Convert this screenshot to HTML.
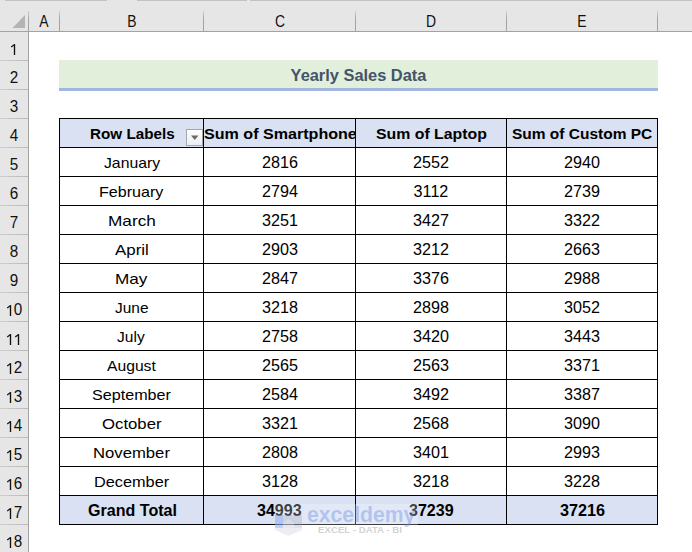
<!DOCTYPE html>
<html><head><meta charset="utf-8"><style>
html,body{margin:0;padding:0;}
body{width:692px;height:552px;overflow:hidden;position:relative;background:#fff;font-family:"Liberation Sans",sans-serif;}
body div{position:absolute;}
.t{line-height:1;text-align:center;white-space:nowrap;}
.f{line-height:1;white-space:nowrap;transform-origin:0 0;}
</style></head><body>
<div style="left:0px;top:0px;width:692px;height:31px;background:#e6e6e6;"></div>
<div style="left:5px;top:0px;width:102px;height:1px;background:#c2c2c2;"></div>
<div style="left:137px;top:0px;width:110px;height:1px;background:#c2c2c2;"></div>
<div style="left:250px;top:0px;width:442px;height:1px;background:#c2c2c2;"></div>
<div style="left:0px;top:31px;width:692px;height:1px;background:#a3a3a3;"></div>
<div style="left:0px;top:32px;width:28px;height:520px;background:#e6e6e6;"></div>
<div style="left:28px;top:11px;width:1px;height:21px;background:linear-gradient(#d2d2d2,#a3a3a3 40%);"></div>
<div style="left:28px;top:32px;width:1px;height:520px;background:#a3a3a3;"></div>
<div style="left:59px;top:11px;width:1px;height:20px;background:linear-gradient(#d2d2d2,#a3a3a3 40%);"></div>
<div style="left:203px;top:11px;width:1px;height:20px;background:linear-gradient(#d2d2d2,#a3a3a3 40%);"></div>
<div style="left:355px;top:11px;width:1px;height:20px;background:linear-gradient(#d2d2d2,#a3a3a3 40%);"></div>
<div style="left:506px;top:11px;width:1px;height:20px;background:linear-gradient(#d2d2d2,#a3a3a3 40%);"></div>
<div style="left:657px;top:11px;width:1px;height:20px;background:linear-gradient(#d2d2d2,#a3a3a3 40%);"></div>
<svg style="position:absolute;left:0;top:0" width="30" height="31"><polygon points="12.5,28 25,28 25,15" fill="#b4b4b4"/></svg>
<div style="left:0px;top:60px;width:28px;height:1px;background:linear-gradient(90deg,#cdcdcd,#b8b8b8);"></div>
<div style="left:0px;top:89px;width:28px;height:1px;background:linear-gradient(90deg,#cdcdcd,#b8b8b8);"></div>
<div style="left:0px;top:118px;width:28px;height:1px;background:linear-gradient(90deg,#cdcdcd,#b8b8b8);"></div>
<div style="left:0px;top:147px;width:28px;height:1px;background:linear-gradient(90deg,#cdcdcd,#b8b8b8);"></div>
<div style="left:0px;top:176px;width:28px;height:1px;background:linear-gradient(90deg,#cdcdcd,#b8b8b8);"></div>
<div style="left:0px;top:205px;width:28px;height:1px;background:linear-gradient(90deg,#cdcdcd,#b8b8b8);"></div>
<div style="left:0px;top:234px;width:28px;height:1px;background:linear-gradient(90deg,#cdcdcd,#b8b8b8);"></div>
<div style="left:0px;top:263px;width:28px;height:1px;background:linear-gradient(90deg,#cdcdcd,#b8b8b8);"></div>
<div style="left:0px;top:292px;width:28px;height:1px;background:linear-gradient(90deg,#cdcdcd,#b8b8b8);"></div>
<div style="left:0px;top:321px;width:28px;height:1px;background:linear-gradient(90deg,#cdcdcd,#b8b8b8);"></div>
<div style="left:0px;top:350px;width:28px;height:1px;background:linear-gradient(90deg,#cdcdcd,#b8b8b8);"></div>
<div style="left:0px;top:379px;width:28px;height:1px;background:linear-gradient(90deg,#cdcdcd,#b8b8b8);"></div>
<div style="left:0px;top:408px;width:28px;height:1px;background:linear-gradient(90deg,#cdcdcd,#b8b8b8);"></div>
<div style="left:0px;top:437px;width:28px;height:1px;background:linear-gradient(90deg,#cdcdcd,#b8b8b8);"></div>
<div style="left:0px;top:466px;width:28px;height:1px;background:linear-gradient(90deg,#cdcdcd,#b8b8b8);"></div>
<div style="left:0px;top:495px;width:28px;height:1px;background:linear-gradient(90deg,#cdcdcd,#b8b8b8);"></div>
<div style="left:0px;top:524px;width:28px;height:1px;background:linear-gradient(90deg,#cdcdcd,#b8b8b8);"></div>
<div class="t" style="left:-106.00px;top:14.03px;width:300px;font-size:15.8px;font-weight:normal;color:#111;transform:scaleX(0.88)">A</div>
<div class="t" style="left:-18.50px;top:14.03px;width:300px;font-size:15.8px;font-weight:normal;color:#111;transform:scaleX(0.88)">B</div>
<div class="t" style="left:129.50px;top:14.03px;width:300px;font-size:15.8px;font-weight:normal;color:#111;transform:scaleX(0.88)">C</div>
<div class="t" style="left:281.00px;top:14.03px;width:300px;font-size:15.8px;font-weight:normal;color:#111;transform:scaleX(0.88)">D</div>
<div class="t" style="left:432.00px;top:14.03px;width:300px;font-size:15.8px;font-weight:normal;color:#111;transform:scaleX(0.88)">E</div>
<svg style="position:absolute;left:9.60px;top:43.50px" width="8" height="12"><path d="M4.5 0.2V11" stroke="#111" stroke-width="1.35" fill="none"/><path d="M4.6 0.5L1.2 2.9" stroke="#111" stroke-width="1.2" fill="none"/></svg>
<div class="t" style="left:3.60px;top:69.96px;width:20px;font-size:16px;font-weight:normal;color:#111;transform:scaleX(0.95)">2</div>
<div class="t" style="left:3.60px;top:98.96px;width:20px;font-size:16px;font-weight:normal;color:#111;transform:scaleX(0.95)">3</div>
<div class="t" style="left:3.60px;top:127.96px;width:20px;font-size:16px;font-weight:normal;color:#111;transform:scaleX(0.95)">4</div>
<div class="t" style="left:3.60px;top:156.96px;width:20px;font-size:16px;font-weight:normal;color:#111;transform:scaleX(0.95)">5</div>
<div class="t" style="left:3.60px;top:185.96px;width:20px;font-size:16px;font-weight:normal;color:#111;transform:scaleX(0.95)">6</div>
<div class="t" style="left:3.60px;top:214.96px;width:20px;font-size:16px;font-weight:normal;color:#111;transform:scaleX(0.95)">7</div>
<div class="t" style="left:3.60px;top:243.96px;width:20px;font-size:16px;font-weight:normal;color:#111;transform:scaleX(0.95)">8</div>
<div class="t" style="left:3.60px;top:272.96px;width:20px;font-size:16px;font-weight:normal;color:#111;transform:scaleX(0.95)">9</div>
<svg style="position:absolute;left:5.60px;top:304.50px" width="8" height="12"><path d="M4.5 0.2V11" stroke="#111" stroke-width="1.35" fill="none"/><path d="M4.6 0.5L1.2 2.9" stroke="#111" stroke-width="1.2" fill="none"/></svg>
<div class="t" style="left:7.60px;top:301.96px;width:20px;font-size:16px;font-weight:normal;color:#111;transform:scaleX(0.95)">0</div>
<svg style="position:absolute;left:5.60px;top:333.50px" width="8" height="12"><path d="M4.5 0.2V11" stroke="#111" stroke-width="1.35" fill="none"/><path d="M4.6 0.5L1.2 2.9" stroke="#111" stroke-width="1.2" fill="none"/></svg>
<svg style="position:absolute;left:13.60px;top:333.50px" width="8" height="12"><path d="M4.5 0.2V11" stroke="#111" stroke-width="1.35" fill="none"/><path d="M4.6 0.5L1.2 2.9" stroke="#111" stroke-width="1.2" fill="none"/></svg>
<svg style="position:absolute;left:5.60px;top:362.50px" width="8" height="12"><path d="M4.5 0.2V11" stroke="#111" stroke-width="1.35" fill="none"/><path d="M4.6 0.5L1.2 2.9" stroke="#111" stroke-width="1.2" fill="none"/></svg>
<div class="t" style="left:7.60px;top:359.96px;width:20px;font-size:16px;font-weight:normal;color:#111;transform:scaleX(0.95)">2</div>
<svg style="position:absolute;left:5.60px;top:391.50px" width="8" height="12"><path d="M4.5 0.2V11" stroke="#111" stroke-width="1.35" fill="none"/><path d="M4.6 0.5L1.2 2.9" stroke="#111" stroke-width="1.2" fill="none"/></svg>
<div class="t" style="left:7.60px;top:388.96px;width:20px;font-size:16px;font-weight:normal;color:#111;transform:scaleX(0.95)">3</div>
<svg style="position:absolute;left:5.60px;top:420.50px" width="8" height="12"><path d="M4.5 0.2V11" stroke="#111" stroke-width="1.35" fill="none"/><path d="M4.6 0.5L1.2 2.9" stroke="#111" stroke-width="1.2" fill="none"/></svg>
<div class="t" style="left:7.60px;top:417.96px;width:20px;font-size:16px;font-weight:normal;color:#111;transform:scaleX(0.95)">4</div>
<svg style="position:absolute;left:5.60px;top:449.50px" width="8" height="12"><path d="M4.5 0.2V11" stroke="#111" stroke-width="1.35" fill="none"/><path d="M4.6 0.5L1.2 2.9" stroke="#111" stroke-width="1.2" fill="none"/></svg>
<div class="t" style="left:7.60px;top:446.96px;width:20px;font-size:16px;font-weight:normal;color:#111;transform:scaleX(0.95)">5</div>
<svg style="position:absolute;left:5.60px;top:478.50px" width="8" height="12"><path d="M4.5 0.2V11" stroke="#111" stroke-width="1.35" fill="none"/><path d="M4.6 0.5L1.2 2.9" stroke="#111" stroke-width="1.2" fill="none"/></svg>
<div class="t" style="left:7.60px;top:475.96px;width:20px;font-size:16px;font-weight:normal;color:#111;transform:scaleX(0.95)">6</div>
<svg style="position:absolute;left:5.60px;top:507.50px" width="8" height="12"><path d="M4.5 0.2V11" stroke="#111" stroke-width="1.35" fill="none"/><path d="M4.6 0.5L1.2 2.9" stroke="#111" stroke-width="1.2" fill="none"/></svg>
<div class="t" style="left:7.60px;top:504.96px;width:20px;font-size:16px;font-weight:normal;color:#111;transform:scaleX(0.95)">7</div>
<svg style="position:absolute;left:5.60px;top:536.50px" width="8" height="12"><path d="M4.5 0.2V11" stroke="#111" stroke-width="1.35" fill="none"/><path d="M4.6 0.5L1.2 2.9" stroke="#111" stroke-width="1.2" fill="none"/></svg>
<div class="t" style="left:7.60px;top:533.96px;width:20px;font-size:16px;font-weight:normal;color:#111;transform:scaleX(0.95)">8</div>
<div style="left:59px;top:60px;width:599px;height:28px;background:#e2efda;"></div>
<div style="left:59px;top:88px;width:599px;height:3px;background:#a2b6e0;"></div>
<div class="t" style="left:208.50px;top:67.12px;width:300px;font-size:16.4px;font-weight:bold;color:#44546a;">Yearly Sales Data</div>
<div style="left:60px;top:119px;width:597px;height:28px;background:#d9e1f2;"></div>
<div style="left:60px;top:496px;width:597px;height:28px;background:#d9e1f2;"></div>
<div style="left:59px;top:118px;width:1px;height:407px;background:#000;"></div>
<div style="left:203px;top:118px;width:1px;height:407px;background:#000;"></div>
<div style="left:355px;top:118px;width:1px;height:407px;background:#000;"></div>
<div style="left:506px;top:118px;width:1px;height:407px;background:#000;"></div>
<div style="left:657px;top:118px;width:1px;height:407px;background:#000;"></div>
<div style="left:59px;top:118px;width:599px;height:1px;background:#000;"></div>
<div style="left:59px;top:147px;width:599px;height:1px;background:#000;"></div>
<div style="left:59px;top:176px;width:599px;height:1px;background:#000;"></div>
<div style="left:59px;top:205px;width:599px;height:1px;background:#000;"></div>
<div style="left:59px;top:234px;width:599px;height:1px;background:#000;"></div>
<div style="left:59px;top:263px;width:599px;height:1px;background:#000;"></div>
<div style="left:59px;top:292px;width:599px;height:1px;background:#000;"></div>
<div style="left:59px;top:321px;width:599px;height:1px;background:#000;"></div>
<div style="left:59px;top:350px;width:599px;height:1px;background:#000;"></div>
<div style="left:59px;top:379px;width:599px;height:1px;background:#000;"></div>
<div style="left:59px;top:408px;width:599px;height:1px;background:#000;"></div>
<div style="left:59px;top:437px;width:599px;height:1px;background:#000;"></div>
<div style="left:59px;top:466px;width:599px;height:1px;background:#000;"></div>
<div style="left:59px;top:495px;width:599px;height:1px;background:#000;"></div>
<div style="left:59px;top:524px;width:599px;height:1px;background:#000;"></div>
<div class="f" style="left:89.77px;top:125.87px;font-size:15.273px;font-weight:bold;color:#000;transform:scaleX(0.9976);">Row Labels</div>
<div style="left:204px;top:119px;width:151px;height:28px;overflow:hidden"><div class="f" style="left:0.12px;top:6.75px;font-size:15.418px;font-weight:bold;color:#000;transform:scaleX(1.0439);">Sum of Smartphone</div></div>
<div class="f" style="left:375.72px;top:125.87px;font-size:15.273px;font-weight:bold;color:#000;transform:scaleX(1.0378);">Sum of Laptop</div>
<div class="f" style="left:511.54px;top:125.87px;font-size:15.273px;font-weight:bold;color:#000;transform:scaleX(1.0144);">Sum of Custom PC</div>
<div style="left:186px;top:129px;width:17px;height:17px;border:1px solid #a8a8a8;background:linear-gradient(#fdfdfd,#eceef2);box-sizing:border-box"></div>
<svg style="position:absolute;left:186px;top:129px" width="17" height="17"><polygon points="5,6.5 12.5,6.5 8.75,11" fill="#6b6b6b"/></svg>
<div class="f" style="left:103.56px;top:155.03px;font-size:15.564px;font-weight:normal;color:#000;transform:scaleX(1.0128);">January</div>
<div class="t" style="left:129.50px;top:154.63px;width:300px;font-size:15.8px;font-weight:normal;color:#000;transform:scaleX(1.023)">2816</div>
<div class="t" style="left:281.00px;top:154.63px;width:300px;font-size:15.8px;font-weight:normal;color:#000;transform:scaleX(1.023)">2552</div>
<div class="t" style="left:432.00px;top:154.63px;width:300px;font-size:15.8px;font-weight:normal;color:#000;transform:scaleX(1.023)">2940</div>
<div class="f" style="left:99.47px;top:184.03px;font-size:15.564px;font-weight:normal;color:#000;transform:scaleX(1.0349);">February</div>
<div class="t" style="left:129.50px;top:183.63px;width:300px;font-size:15.8px;font-weight:normal;color:#000;transform:scaleX(1.023)">2794</div>
<div class="t" style="left:281.00px;top:183.63px;width:300px;font-size:15.8px;font-weight:normal;color:#000;transform:scaleX(1.023)">3112</div>
<div class="t" style="left:432.00px;top:183.63px;width:300px;font-size:15.8px;font-weight:normal;color:#000;transform:scaleX(1.023)">2739</div>
<div class="f" style="left:107.58px;top:213.03px;font-size:15.564px;font-weight:normal;color:#000;transform:scaleX(1.1067);">March</div>
<div class="t" style="left:129.50px;top:212.63px;width:300px;font-size:15.8px;font-weight:normal;color:#000;transform:scaleX(1.023)">3251</div>
<div class="t" style="left:281.00px;top:212.63px;width:300px;font-size:15.8px;font-weight:normal;color:#000;transform:scaleX(1.023)">3427</div>
<div class="t" style="left:432.00px;top:212.63px;width:300px;font-size:15.8px;font-weight:normal;color:#000;transform:scaleX(1.023)">3322</div>
<div class="f" style="left:114.86px;top:242.03px;font-size:15.564px;font-weight:normal;color:#000;transform:scaleX(1.0853);">April</div>
<div class="t" style="left:129.50px;top:241.63px;width:300px;font-size:15.8px;font-weight:normal;color:#000;transform:scaleX(1.023)">2903</div>
<div class="t" style="left:281.00px;top:241.63px;width:300px;font-size:15.8px;font-weight:normal;color:#000;transform:scaleX(1.023)">3212</div>
<div class="t" style="left:432.00px;top:241.63px;width:300px;font-size:15.8px;font-weight:normal;color:#000;transform:scaleX(1.023)">2663</div>
<div class="f" style="left:115.48px;top:271.03px;font-size:15.564px;font-weight:normal;color:#000;transform:scaleX(1.1035);">May</div>
<div class="t" style="left:129.50px;top:270.63px;width:300px;font-size:15.8px;font-weight:normal;color:#000;transform:scaleX(1.023)">2847</div>
<div class="t" style="left:281.00px;top:270.63px;width:300px;font-size:15.8px;font-weight:normal;color:#000;transform:scaleX(1.023)">3376</div>
<div class="t" style="left:432.00px;top:270.63px;width:300px;font-size:15.8px;font-weight:normal;color:#000;transform:scaleX(1.023)">2988</div>
<div class="f" style="left:114.67px;top:300.03px;font-size:15.564px;font-weight:normal;color:#000;transform:scaleX(0.9927);">June</div>
<div class="t" style="left:129.50px;top:299.63px;width:300px;font-size:15.8px;font-weight:normal;color:#000;transform:scaleX(1.023)">3218</div>
<div class="t" style="left:281.00px;top:299.63px;width:300px;font-size:15.8px;font-weight:normal;color:#000;transform:scaleX(1.023)">2898</div>
<div class="t" style="left:432.00px;top:299.63px;width:300px;font-size:15.8px;font-weight:normal;color:#000;transform:scaleX(1.023)">3052</div>
<div class="f" style="left:117.47px;top:329.03px;font-size:15.564px;font-weight:normal;color:#000;transform:scaleX(1.0003);">July</div>
<div class="t" style="left:129.50px;top:328.63px;width:300px;font-size:15.8px;font-weight:normal;color:#000;transform:scaleX(1.023)">2758</div>
<div class="t" style="left:281.00px;top:328.63px;width:300px;font-size:15.8px;font-weight:normal;color:#000;transform:scaleX(1.023)">3420</div>
<div class="t" style="left:432.00px;top:328.63px;width:300px;font-size:15.8px;font-weight:normal;color:#000;transform:scaleX(1.023)">3443</div>
<div class="f" style="left:106.96px;top:358.03px;font-size:15.564px;font-weight:normal;color:#000;transform:scaleX(1.0086);">August</div>
<div class="t" style="left:129.50px;top:357.63px;width:300px;font-size:15.8px;font-weight:normal;color:#000;transform:scaleX(1.023)">2565</div>
<div class="t" style="left:281.00px;top:357.63px;width:300px;font-size:15.8px;font-weight:normal;color:#000;transform:scaleX(1.023)">2563</div>
<div class="t" style="left:432.00px;top:357.63px;width:300px;font-size:15.8px;font-weight:normal;color:#000;transform:scaleX(1.023)">3371</div>
<div class="f" style="left:91.57px;top:387.03px;font-size:15.564px;font-weight:normal;color:#000;transform:scaleX(1.0376);">September</div>
<div class="t" style="left:129.50px;top:386.63px;width:300px;font-size:15.8px;font-weight:normal;color:#000;transform:scaleX(1.023)">2584</div>
<div class="t" style="left:281.00px;top:386.63px;width:300px;font-size:15.8px;font-weight:normal;color:#000;transform:scaleX(1.023)">3492</div>
<div class="t" style="left:432.00px;top:386.63px;width:300px;font-size:15.8px;font-weight:normal;color:#000;transform:scaleX(1.023)">3387</div>
<div class="f" style="left:101.80px;top:416.03px;font-size:15.564px;font-weight:normal;color:#000;transform:scaleX(1.0773);">October</div>
<div class="t" style="left:129.50px;top:415.63px;width:300px;font-size:15.8px;font-weight:normal;color:#000;transform:scaleX(1.023)">3321</div>
<div class="t" style="left:281.00px;top:415.63px;width:300px;font-size:15.8px;font-weight:normal;color:#000;transform:scaleX(1.023)">2568</div>
<div class="t" style="left:432.00px;top:415.63px;width:300px;font-size:15.8px;font-weight:normal;color:#000;transform:scaleX(1.023)">3090</div>
<div class="f" style="left:92.52px;top:445.03px;font-size:15.564px;font-weight:normal;color:#000;transform:scaleX(1.0730);">November</div>
<div class="t" style="left:129.50px;top:444.63px;width:300px;font-size:15.8px;font-weight:normal;color:#000;transform:scaleX(1.023)">2808</div>
<div class="t" style="left:281.00px;top:444.63px;width:300px;font-size:15.8px;font-weight:normal;color:#000;transform:scaleX(1.023)">3401</div>
<div class="t" style="left:432.00px;top:444.63px;width:300px;font-size:15.8px;font-weight:normal;color:#000;transform:scaleX(1.023)">2993</div>
<div class="f" style="left:93.56px;top:474.03px;font-size:15.564px;font-weight:normal;color:#000;transform:scaleX(1.0474);">December</div>
<div class="t" style="left:129.50px;top:473.63px;width:300px;font-size:15.8px;font-weight:normal;color:#000;transform:scaleX(1.023)">3128</div>
<div class="t" style="left:281.00px;top:473.63px;width:300px;font-size:15.8px;font-weight:normal;color:#000;transform:scaleX(1.023)">3218</div>
<div class="t" style="left:432.00px;top:473.63px;width:300px;font-size:15.8px;font-weight:normal;color:#000;transform:scaleX(1.023)">3228</div>
<div class="f" style="left:87.56px;top:502.70px;font-size:15.709px;font-weight:bold;color:#000;transform:scaleX(1.0239);">Grand Total</div>
<div class="f" style="left:257.04px;top:502.70px;font-size:15.709px;font-weight:bold;color:#000;transform:scaleX(1.0241);">34993</div>
<div class="f" style="left:409.14px;top:502.70px;font-size:15.709px;font-weight:bold;color:#000;transform:scaleX(1.0241);">37239</div>
<div class="f" style="left:560.03px;top:502.70px;font-size:15.709px;font-weight:bold;color:#000;transform:scaleX(1.0335);">37216</div>
<div style="left:275px;top:504px;width:143px;height:33px;background:rgba(255,255,255,0.25)"></div>
<svg style="position:absolute;left:0;top:0" width="692" height="552"><rect x="275" y="515" width="8" height="13" fill="rgba(120,155,235,0.45)"/><rect x="283" y="515" width="19" height="13" fill="rgba(150,160,180,0.30)"/><polygon points="283,523 288.5,519 294,523 294,528 283,528" fill="rgba(255,255,255,0.25)"/><polygon points="275,528 302,528 302,530 288.5,536 275,530" fill="rgba(200,205,215,0.35)"/></svg>
<div class="f" style="left:306.95px;top:503.95px;font-size:21.673px;font-weight:bold;color:rgba(110,145,230,0.42);transform:scaleX(0.9783);">exceldemy</div>
<div class="f" style="left:317.95px;top:526.06px;font-size:8.436px;font-weight:bold;color:rgba(140,140,140,0.40);transform:scaleX(1.1479);">EXCEL - DATA - BI</div>
</body></html>
